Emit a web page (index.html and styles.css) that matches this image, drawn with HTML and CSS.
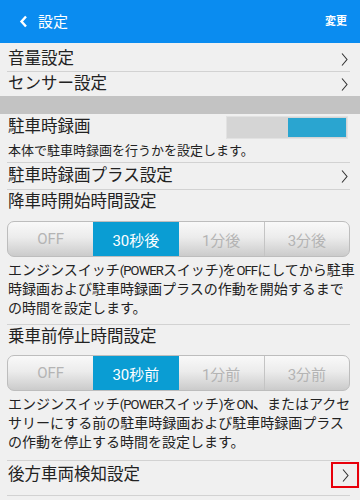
FILE: index.html
```html
<!DOCTYPE html>
<html lang="ja">
<head>
<meta charset="utf-8">
<link rel="stylesheet" href="styles.css">
</head>
<body>
<div class="header">
  <svg class="back" width="9" height="13" viewBox="0 0 9 13"><polyline points="7,1.5 2.5,6.5 7,11.5" fill="none" stroke="#fff" stroke-width="2.4"/></svg>
  <span class="htitle">設定</span>
  <span class="haction">変更</span>
</div>
<div class="content">
  <div class="row r1 line"><span>音量設定</span><svg class="chev" width="7" height="13" viewBox="0 0 7 13"><polyline points="1,0.5 6,6.5 1,12.5" fill="none" stroke="#333" stroke-width="1.1"/></svg></div>
  <div class="row r2"><span>センサー設定</span><svg class="chev" width="7" height="13" viewBox="0 0 7 13"><polyline points="1,0.5 6,6.5 1,12.5" fill="none" stroke="#333" stroke-width="1.1"/></svg></div>
</div>
<div class="band"></div>
<div class="content">
  <div class="row r3"><span>駐車時録画</span><div class="toggle"><div class="knob"></div></div></div>
  <div class="note line">本体で駐車時録画を行うかを設定します。</div>
  <div class="row r4 line"><span>駐車時録画プラス設定</span><svg class="chev" width="7" height="13" viewBox="0 0 7 13"><polyline points="1,0.5 6,6.5 1,12.5" fill="none" stroke="#333" stroke-width="1.1"/></svg></div>
  <div class="row stitle">降車時開始時間設定</div>
  <div class="seg">
    <div class="opt">OFF</div>
    <div class="opt on">30秒後</div>
    <div class="opt">1分後</div>
    <div class="opt">3分後</div>
  </div>
  <div class="desc d1 line">エンジンスイッチ<span class="lat">(POWER</span>スイッチ<span class="lat">)</span>を<span class="lat">OFF</span>にしてから駐車<br>時録画および駐車時録画プラスの作動を開始するまで<br>の時間を設定します。</div>
  <div class="row stitle s2">乗車前停止時間設定</div>
  <div class="seg">
    <div class="opt">OFF</div>
    <div class="opt on">30秒前</div>
    <div class="opt">1分前</div>
    <div class="opt">3分前</div>
  </div>
  <div class="desc d2 line">エンジンスイッチ<span class="lat">(POWER</span>スイッチ<span class="lat">)</span>を<span class="lat">ON</span>、またはアクセ<br>サリーにする前の駐車時録画および駐車時録画プラス<br>の作動を停止する時間を設定します。</div>
  <div class="row r5 line"><span>後方車両検知設定</span><span class="hl"><svg class="chev" width="7" height="13" viewBox="0 0 7 13"><polyline points="1,0.5 6,6.5 1,12.5" fill="none" stroke="#333" stroke-width="1.1"/></svg></span></div>
</div>
</body>
</html>
```
FILE: styles.css
```css
html, body {
  margin: 0;
  padding: 0;
}
body {
  width: 360px;
  height: 500px;
  overflow: hidden;
  background: #f0f0f0;
  font-family: Roboto, "Noto Sans CJK JP", sans-serif;
  color: #222;
}
.header {
  height: 43px;
  background: #0a8cf0;
  display: flex;
  align-items: center;
  padding: 0 13px 0 19px;
  color: #fff;
}
.back {
  display: block;
  margin-right: 10px;
}
.htitle {
  font-size: 15px;
  line-height: 20px;
  flex: 1;
}
.haction {
  font-size: 11px;
  font-weight: bold;
  line-height: 16px;
}
.content {
  padding: 0 10px 0 7px;
}
.line {
  border-bottom: 1px solid #d2d2d2;
}
.row {
  display: flex;
  align-items: center;
  justify-content: space-between;
  font-size: 16.5px;
  line-height: 22px;
  padding-left: 1px;
}
.chev {
  display: block;
  margin-right: 2px;
}
.r1 {
  height: 24px;
  padding-top: 4px;
}
.r2 {
  height: 24px;
}
.band {
  height: 18px;
  background: #c3c3c3;
}
.r3 {
  height: 26px;
}
.toggle {
  width: 118px;
  height: 19px;
  background: #d5d5d5;
  border: 1px solid #e2e2e2;
  display: flex;
  justify-content: flex-end;
  align-items: stretch;
  padding: 1px;
  margin-right: 2px;
}
.knob {
  width: 58px;
  background: #2aa5d0;
}
.note {
  font-size: 13px;
  line-height: 22px;
  padding-left: 1px;
}
.r4 {
  height: 26px;
}
.stitle {
  height: 24px;
}
.seg {
  margin-top: 7px;
  height: 34px;
  border: 1px solid #bdbdbd;
  border-radius: 7px;
  overflow: hidden;
  display: grid;
  grid-template-columns: 1fr 1fr 1fr 1fr;
  background: linear-gradient(#f9f9f9, #ececec 45%, #cbcbcb);
}
.opt {
  display: flex;
  align-items: center;
  justify-content: center;
  font-size: 15px;
  color: #b4b4b4;
  border-left: 1px solid #c4c4c4;
}
.opt:first-child {
  border-left: none;
}
.opt.on {
  background: #0a9dd3;
  color: #fff;
  border-left: none;
}
.opt.on + .opt {
  border-left: none;
}
.desc {
  font-size: 14px;
  line-height: 19px;
  padding-left: 1px;
  white-space: nowrap;
}
.lat {
  font-size: 13px;
  letter-spacing: -0.9px;
}
.d1 {
  padding-top: 4px;
  padding-bottom: 6px;
}
.s2 {
  height: 23px;
  padding-top: 0;
}
.d2 {
  padding-top: 4px;
  padding-bottom: 8px;
}
.r5 {
  height: 28px;
  padding-bottom: 6px;
}
.hl {
  width: 24px;
  height: 22px;
  border: 2px solid #e8000b;
  display: flex;
  align-items: center;
  justify-content: center;
  margin-right: -9px;
}
.hl .chev {
  margin-right: 0;
}
```
